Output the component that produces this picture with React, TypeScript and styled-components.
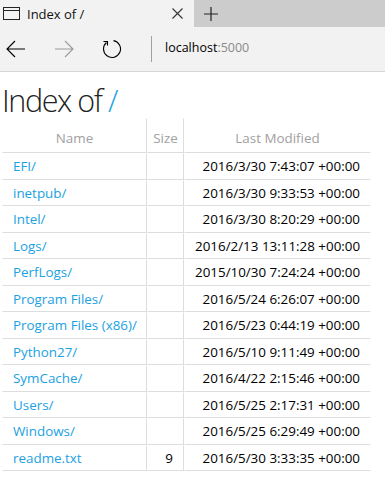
import React from 'react';
import styled, { createGlobalStyle } from 'styled-components';

const GlobalStyle = createGlobalStyle`
  html, body {
    margin: 0;
    padding: 0;
    background: #fff;
    font-family: "Open Sans", "Liberation Sans", sans-serif;
  }
`;

const Window = styled.div`
  width: 385px;
  height: 478px;
  overflow: hidden;
  background: #fff;
`;

const TabBar = styled.div`
  display: flex;
  height: 27px;
  background: #cccccc;
`;

const Tab = styled.div`
  display: flex;
  align-items: center;
  width: 194px;
  padding-left: 3px;
  box-sizing: border-box;
  background: #f2f2f2;
`;

const TabTitle = styled.span`
  margin-left: 6px;
  font-size: 13px;
  color: #111;
`;

const CloseIcon = styled.svg`
  margin-left: auto;
  margin-right: 11px;
`;

const NewTab = styled.div`
  display: flex;
  align-items: center;
  justify-content: center;
  width: 34px;
`;

const Toolbar = styled.div`
  display: flex;
  align-items: center;
  height: 44px;
  background: #f2f2f2;
  border-bottom: 1px solid #d6d6d6;
`;

const NavButton = styled.div`
  display: flex;
  align-items: center;
  justify-content: center;
  width: 32px;
  height: 32px;
  & + & {
    margin-left: 16px;
  }
`;

const Separator = styled.div`
  width: 1px;
  height: 26px;
  margin-left: 23px;
  background: #a0a0a0;
`;

const Address = styled.div`
  margin-left: 13px;
  font-size: 12.5px;
  color: #000;
  padding-bottom: 3px;
`;

const Port = styled.span`
  color: #8a8a8a;
`;

const Content = styled.main`
  padding-left: 2px;
`;

const Heading = styled.h1`
  margin: 10px 0 0;
  font-size: 30.5px;
  line-height: 36px;
  font-weight: 300;
  letter-spacing: -1.4px;
  color: #222;
`;

const Link = styled.a`
  color: #1ba1e2;
  text-decoration: none;
`;

const Table = styled.table`
  border-collapse: separate;
  border-spacing: 0;
  table-layout: fixed;
  width: 369px;
  font-size: 13.4px;
`;

const Th = styled.th<{ w: number }>`
  width: ${({ w }) => w}px;
  padding: 10px 5px 5px;
  line-height: 18px;
  font-weight: 400;
  color: #a0a0a0;
  text-align: center;
  box-sizing: border-box;
  border: 1px solid transparent;
  border-right-color: #ddd;
  border-bottom-color: #ddd;
  &:last-child {
    border-right-color: transparent;
  }
`;

const Td = styled.td<{ right?: boolean }>`
  padding: 3px 10px;
  line-height: 18.5px;
  text-align: ${({ right }) => (right ? 'right' : 'left')};
  color: #000;
  white-space: nowrap;
  box-sizing: border-box;
  border: 1px solid transparent;
  border-right-color: #ddd;
  border-bottom-color: #ddd;
  &:last-child {
    border-right-color: transparent;
  }
`;

const entries = [
  { name: 'EFI/', size: '', modified: '2016/3/30 7:43:07 +00:00' },
  { name: 'inetpub/', size: '', modified: '2016/3/30 9:33:53 +00:00' },
  { name: 'Intel/', size: '', modified: '2016/3/30 8:20:29 +00:00' },
  { name: 'Logs/', size: '', modified: '2016/2/13 13:11:28 +00:00' },
  { name: 'PerfLogs/', size: '', modified: '2015/10/30 7:24:24 +00:00' },
  { name: 'Program Files/', size: '', modified: '2016/5/24 6:26:07 +00:00' },
  { name: 'Program Files (x86)/', size: '', modified: '2016/5/23 0:44:19 +00:00' },
  { name: 'Python27/', size: '', modified: '2016/5/10 9:11:49 +00:00' },
  { name: 'SymCache/', size: '', modified: '2016/4/22 2:15:46 +00:00' },
  { name: 'Users/', size: '', modified: '2016/5/25 2:17:31 +00:00' },
  { name: 'Windows/', size: '', modified: '2016/5/25 6:29:49 +00:00' },
  { name: 'readme.txt', size: '9', modified: '2016/5/30 3:33:35 +00:00' },
];

const App: React.FC = () => {
  return (
    <Window>
      <GlobalStyle />
      <TabBar>
        <Tab>
          <svg width="18" height="14" viewBox="0 0 18 14">
            <rect x="0.5" y="0.5" width="16" height="12" fill="none" stroke="#222" strokeWidth="1" />
            <line x1="0.5" y1="3.5" x2="16.5" y2="3.5" stroke="#222" strokeWidth="1" />
          </svg>
          <TabTitle>Index of /</TabTitle>
          <CloseIcon width="11" height="11" viewBox="0 0 11 11">
            <path d="M0.5 0.5 L10.5 10.5 M10.5 0.5 L0.5 10.5" stroke="#333" strokeWidth="1.1" />
          </CloseIcon>
        </Tab>
        <NewTab>
          <svg width="14" height="14" viewBox="0 0 14 14">
            <path d="M7 0 V14 M0 7 H14" stroke="#222" strokeWidth="1.2" />
          </svg>
        </NewTab>
      </TabBar>
      <Toolbar>
        <NavButton>
          <svg width="20" height="18" viewBox="0 0 20 18">
            <path d="M1 9 H19 M9 1 L1 9 L9 17" fill="none" stroke="#000" strokeWidth="1.1" />
          </svg>
        </NavButton>
        <NavButton>
          <svg width="20" height="18" viewBox="0 0 20 18">
            <path d="M1 9 H19 M11 1 L19 9 L11 17" fill="none" stroke="#9a9a9a" strokeWidth="1.1" />
          </svg>
        </NavButton>
        <NavButton>
          <svg width="20" height="20" viewBox="0 0 20 20">
            <path d="M11.5 1.6 A8.5 8.5 0 1 1 4.5 3.5" fill="none" stroke="#000" strokeWidth="1.1" />
            <path d="M1.5 2.5 H5.5 V6.5" fill="none" stroke="#000" strokeWidth="1.1" />
          </svg>
        </NavButton>
        <Separator />
        <Address>
          localhost<Port>:5000</Port>
        </Address>
      </Toolbar>
      <Content>
        <Heading>
          Index of <Link href="/">/</Link>
        </Heading>
        <Table>
          <thead>
            <tr>
              <Th w={145}>Name</Th>
              <Th w={37}>Size</Th>
              <Th w={187}>Last Modified</Th>
            </tr>
          </thead>
          <tbody>
            {entries.map((e) => (
              <tr key={e.name}>
                <Td>
                  <Link href={'./' + e.name}>{e.name}</Link>
                </Td>
                <Td right>{e.size}</Td>
                <Td right>{e.modified}</Td>
              </tr>
            ))}
          </tbody>
        </Table>
      </Content>
    </Window>
  );
};

export default App;
